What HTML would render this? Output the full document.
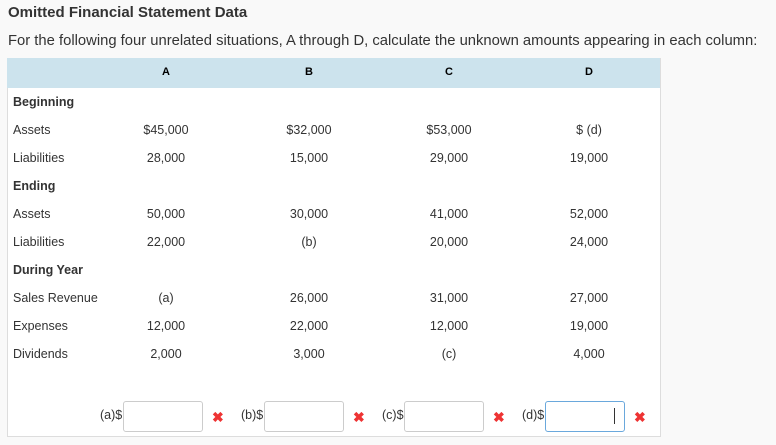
<!DOCTYPE html><html><head><style>
body{margin:0;width:776px;height:444px;background:#f9f9f9;font-family:"Liberation Sans",sans-serif;color:#333;position:relative;overflow:hidden}
.a{position:absolute;white-space:nowrap}
h1{position:absolute;left:8px;top:4px;margin:0;font-size:15px;font-weight:bold;color:#333}
.p{left:8px;top:33px;font-size:14.8px}
.box{position:absolute;left:7px;top:58px;width:652px;height:378px;background:#fff;border:1px solid #ddd;border-top:none}
.hd{position:absolute;left:7px;top:58px;width:653px;height:30px;background:#cce3ed}
.c{font-size:12.5px;transform:translateX(-50%)}
.h{font-weight:bold;font-size:11px;top:66px;color:#000}
.l{left:13px;font-size:12.5px}
.b{font-weight:bold}
.in{position:absolute;top:401px;width:78px;height:29px;border:1px solid #ccc;border-radius:3px;background:#fff}
.x{position:absolute;top:409px;color:#e33;font-size:14px;font-weight:bold}
.lb{position:absolute;top:408px;font-size:12.5px}
.rows{position:absolute;left:0;top:1px;width:776px;height:444px}
</style></head><body>
<h1>Omitted Financial Statement Data</h1>
<div class="a p">For the following four unrelated situations, A through D, calculate the unknown amounts appearing in each column:</div>
<div class="box"></div><div class="hd"></div>
<div class="a c h" style="left:166px">A</div><div class="a c h" style="left:309px">B</div><div class="a c h" style="left:449px">C</div><div class="a c h" style="left:589px">D</div>
<div class="rows">
<div class="a l b" style="top:94px">Beginning</div>
<div class="a l" style="top:122px">Assets</div>
<div class="a l" style="top:150px">Liabilities</div>
<div class="a l b" style="top:178px">Ending</div>
<div class="a l" style="top:206px">Assets</div>
<div class="a l" style="top:234px">Liabilities</div>
<div class="a l b" style="top:262px">During Year</div>
<div class="a l" style="top:290px">Sales Revenue</div>
<div class="a l" style="top:318px">Expenses</div>
<div class="a l" style="top:346px">Dividends</div>
<div class="a c" style="left:166px;top:122px">$45,000</div><div class="a c" style="left:309px;top:122px">$32,000</div><div class="a c" style="left:449px;top:122px">$53,000</div><div class="a c" style="left:589px;top:122px">$ (d)</div>
<div class="a c" style="left:166px;top:150px">28,000</div><div class="a c" style="left:309px;top:150px">15,000</div><div class="a c" style="left:449px;top:150px">29,000</div><div class="a c" style="left:589px;top:150px">19,000</div>
<div class="a c" style="left:166px;top:206px">50,000</div><div class="a c" style="left:309px;top:206px">30,000</div><div class="a c" style="left:449px;top:206px">41,000</div><div class="a c" style="left:589px;top:206px">52,000</div>
<div class="a c" style="left:166px;top:234px">22,000</div><div class="a c" style="left:309px;top:234px">(b)</div><div class="a c" style="left:449px;top:234px">20,000</div><div class="a c" style="left:589px;top:234px">24,000</div>
<div class="a c" style="left:166px;top:290px">(a)</div><div class="a c" style="left:309px;top:290px">26,000</div><div class="a c" style="left:449px;top:290px">31,000</div><div class="a c" style="left:589px;top:290px">27,000</div>
<div class="a c" style="left:166px;top:318px">12,000</div><div class="a c" style="left:309px;top:318px">22,000</div><div class="a c" style="left:449px;top:318px">12,000</div><div class="a c" style="left:589px;top:318px">19,000</div>
<div class="a c" style="left:166px;top:346px">2,000</div><div class="a c" style="left:309px;top:346px">3,000</div><div class="a c" style="left:449px;top:346px">(c)</div><div class="a c" style="left:589px;top:346px">4,000</div>
</div>
<div class="lb" style="left:100px">(a)$</div><div class="in" style="left:123px"></div><div class="x" style="left:212px">✖</div>
<div class="lb" style="left:241px">(b)$</div><div class="in" style="left:264px"></div><div class="x" style="left:353px">✖</div>
<div class="lb" style="left:382px">(c)$</div><div class="in" style="left:404px"></div><div class="x" style="left:493px">✖</div>
<div class="lb" style="left:522px">(d)$</div><div class="in" style="left:545px;border-color:#6aa8dc"><div style="position:absolute;left:68px;top:6px;width:1px;height:16px;background:#333"></div></div><div class="x" style="left:634px">✖</div>
</body></html>
